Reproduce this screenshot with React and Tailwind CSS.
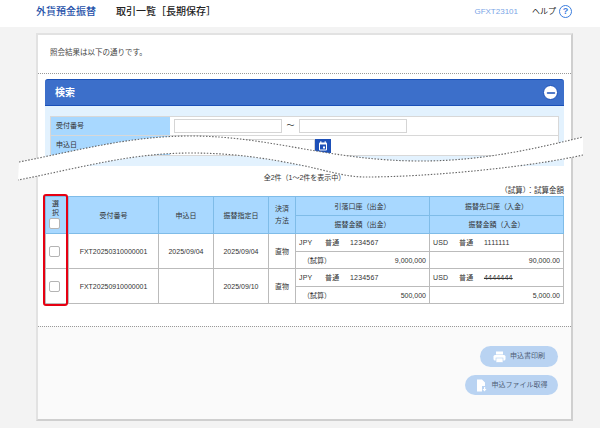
import { Minus } from "lucide-react";

const font = { fontFamily: '"Liberation Sans", "Noto Sans CJK JP", sans-serif' };

const rows = [
  { no: "FXT20250310000001", applied: "2025/09/04", date: "2025/09/04", account: "1111111", from: "9,000,000", to: "90,000.00", strike: false },
  { no: "FXT20250910000001", applied: "", date: "2025/09/10", account: "4444444", from: "500,000", to: "5,000.00", strike: true },
];

const waveTop = "M19 162C80 150 130 136 191 136C270 136 330 161 421 161C480 161 530 150 583 137";
const waveBottom = "M583 155C530 167 430 177 365 177C345 177 325 170 300 165C270 159 235 153 191 153C130 153 80 168 18 180";

function Account({ currency, number, strike }) {
  return (
    <div className="flex pl-[3px] tracking-[0.2px]">
      <span className="w-[26px]">{currency}</span>
      <span className="w-[25px]">普通</span>
      <span className={strike ? "line-through" : ""}>{number}</span>
    </div>
  );
}

function Checkbox({ className }) {
  return <div className={`w-[11px] h-[11px] bg-white border border-[#b4b4b4] rounded-[2px] ml-[3px] ${className || ""}`} />;
}

function Wave() {
  return (
    <svg className="absolute left-0 top-0" width="600" height="428" viewBox="0 0 600 428">
      <path d={`${waveTop}V155C530 167 430 177 365 177C345 177 325 170 300 165C270 159 235 153 191 153C130 153 80 168 18 180Z`} fill="#fff" />
      <path d={waveTop} fill="none" stroke="#666" strokeWidth="1.1" strokeDasharray="1.5 1.6" />
      <path d={waveBottom} fill="none" stroke="#666" strokeWidth="1.1" strokeDasharray="1.5 1.6" />
    </svg>
  );
}

export default function App() {
  return (
    <div className="relative w-[600px] h-[428px] overflow-hidden bg-[#f3f3f3] text-[#333]" style={font}>
      {/* Header */}
      <div className="h-[27px] bg-white flex items-center pl-[36px] pr-[28px] pb-[4px]">
        <span className="text-[10px] font-medium text-[#1d4fa8] w-[80px]">外貨預金振替</span>
        <span className="text-[10px] font-medium text-[#222]">取引一覧［長期保存］</span>
        <span className="ml-auto text-[8px] text-[#7aa5e6]">GFXT23101</span>
        <span className="ml-[14px] text-[8px] text-[#222]">ヘルプ</span>
        <span className="ml-[3px] w-[13px] h-[13px] rounded-full border-[1.5px] border-[#3b7ddd] text-[#3b7ddd] text-[9px] font-bold flex items-center justify-center leading-none">?</span>
      </div>

      {/* Card */}
      <div className="ml-[36px] mt-[6px] w-[537px] h-[388px] bg-white border-2 border-t-[#e2e2e2] border-l-[#e2e2e2] border-r-[#cfcfcf] border-b-[#cfcfcf] flex flex-col">
        <div className="h-[39px] shrink-0 border-b border-dotted border-[#999] pl-[12px] pt-[13px] text-[7.5px] leading-[10px] text-[#444]">
          照会結果は以下の通りです。
        </div>

        <div className="px-[7px] pt-[5px] flex-1">
          {/* Search panel */}
          <div className="h-[27px] bg-[#3c6fca] border-y border-[#1a50b8] rounded-t-[3px] flex items-center justify-between pl-[10px] pr-[6px]">
            <span className="text-[10px] font-bold text-white">検索</span>
            <span className="w-[15px] h-[15px] rounded-full bg-white border border-[#1a50b8] flex items-center justify-center">
              <Minus size={12} strokeWidth={3} color="#1a50b8" />
            </span>
          </div>
          <div className="h-[60px] bg-[#e3f2fe] px-[5px] pt-[10px]">
            <div className="border border-[#d8d8d8] bg-white text-[7px]">
              <div className="flex h-[19px] border-b border-[#d8d8d8]">
                <div className="w-[119px] bg-[#a8d8ff] pl-[5px] flex items-center">受付番号</div>
                <div className="flex items-center pl-[4px]">
                  <div className="w-[108px] h-[14px] border border-[#d5d5d5]" />
                  <span className="w-[17px] text-center text-[8px]">～</span>
                  <div className="w-[108px] h-[14px] border border-[#d5d5d5]" />
                </div>
              </div>
              <div className="flex h-[19px]">
                <div className="w-[119px] bg-[#a8d8ff] pl-[5px] flex items-center">申込日</div>
                <div className="flex items-center pl-[4px]">
                  <div className="w-[141px] h-[14px] border border-[#d5d5d5]" />
                  <div className="w-[16px] h-[14px] bg-[#1d50b8] flex items-center justify-center">
                    <svg width="10" height="10" viewBox="0 0 10 10">
                      <rect x="1" y="1.5" width="8" height="8" rx="1" fill="#fff" />
                      <rect x="2.2" y="0.3" width="1.2" height="2" fill="#fff" />
                      <rect x="6.6" y="0.3" width="1.2" height="2" fill="#fff" />
                      <rect x="2" y="3.5" width="6" height="5" fill="#1d50b8" />
                      <rect x="5" y="5.5" width="2" height="2" fill="#fff" />
                    </svg>
                  </div>
                </div>
              </div>
            </div>
          </div>

          <div className="text-center text-[7px] leading-[10px] mt-[7px]">全2件（1～2件を表示中）</div>
          <div className="text-right text-[7.5px] leading-[10px] mt-[1px] h-[12px] pt-[2px]">（試算）：試算金額</div>

          {/* Results */}
          <table className="w-[518px] table-fixed border-collapse text-[7px] leading-[9px]">
            <colgroup>
              <col className="w-[23px]" />
              <col className="w-[90px]" />
              <col className="w-[55px]" />
              <col className="w-[55px]" />
              <col className="w-[27px]" />
              <col className="w-[134px]" />
              <col className="w-[134px]" />
            </colgroup>
            <thead className="bg-[#a8d8ff]">
              <tr className="h-[19px]">
                <th rowSpan={2} className="font-normal border border-[#7fbce8] align-top pt-[2px] pr-[3px]">
                  選<br />択
                  <Checkbox className="mt-[1px]" />
                </th>
                <th rowSpan={2} className="font-normal border border-[#7fbce8]">受付番号</th>
                <th rowSpan={2} className="font-normal border border-[#7fbce8]">申込日</th>
                <th rowSpan={2} className="font-normal border border-[#7fbce8]">振替指定日</th>
                <th rowSpan={2} className="font-normal border border-[#7fbce8] leading-[12px]">決済<br />方法</th>
                <th className="font-normal border border-[#7fbce8]">引落口座（出金）</th>
                <th className="font-normal border border-[#7fbce8]">振替先口座（入金）</th>
              </tr>
              <tr className="h-[18px]">
                <th className="font-normal border border-[#7fbce8]">振替金額（出金）</th>
                <th className="font-normal border border-[#7fbce8]">振替金額（入金）</th>
              </tr>
            </thead>
            <tbody>
              {rows.map((row) => [
                <tr key={row.no} className="h-[18px]">
                  <td rowSpan={2} className="border border-[#bbb]"><Checkbox /></td>
                  <td rowSpan={2} className="border border-[#bbb] text-center">{row.no}</td>
                  <td rowSpan={2} className="border border-[#bbb] text-center">{row.applied}</td>
                  <td rowSpan={2} className="border border-[#bbb] text-center">{row.date}</td>
                  <td rowSpan={2} className="border border-[#bbb] text-center">直物</td>
                  <td className="border border-[#bbb]"><Account currency="JPY" number="1234567" /></td>
                  <td className="border border-[#bbb]"><Account currency="USD" number={row.account} strike={row.strike} /></td>
                </tr>,
                <tr key={row.no + "-sub"} className="h-[17px]">
                  <td className="border border-[#bbb] px-[3px]">
                    <div className="flex justify-between pl-[4px]"><span>（試算）</span><span>{row.from}</span></div>
                  </td>
                  <td className="border border-[#bbb] px-[3px] text-right">{row.to}</td>
                </tr>,
              ])}
            </tbody>
          </table>
        </div>

        {/* Footer */}
        <div className="h-[93px] shrink-0 bg-[#fafafa] border-t border-dotted border-[#999] pr-[13px] pt-[19px] flex flex-col items-end gap-[8px]">
          <button className="w-[78px] h-[21px] rounded-full bg-[#b9d3f2] flex items-center justify-center gap-[4px] text-[7px] text-[#4f5f78]">
            <svg width="13" height="12" viewBox="0 0 13 12" fill="#fff">
              <rect x="3" y="0.5" width="7" height="3" />
              <rect x="0.5" y="4" width="12" height="5.5" rx="1.5" />
              <rect x="3" y="7" width="7" height="4.5" stroke="#b9d3f2" strokeWidth="0.7" />
            </svg>
            申込書印刷
          </button>
          <button className="w-[93px] h-[20px] rounded-full bg-[#b9d3f2] flex items-center justify-center gap-[5px] text-[7px] text-[#4f5f78]">
            <svg width="11" height="13" viewBox="0 0 11 13" fill="#fff">
              <path d="M1 0.5H6L9 3.5V7H6V12.5H1Z" />
              <path d="M8 8V10H6.5L8.5 12.5L10.5 10H9.2V8Z" />
            </svg>
            申込ファイル取得
          </button>
        </div>
      </div>

      {/* Annotations over the page */}
      <div className="absolute left-[43px] top-[194px] w-[25px] h-[112px] border-2 border-[#e60012] rounded-[3px]" />
      <Wave />
    </div>
  );
}
